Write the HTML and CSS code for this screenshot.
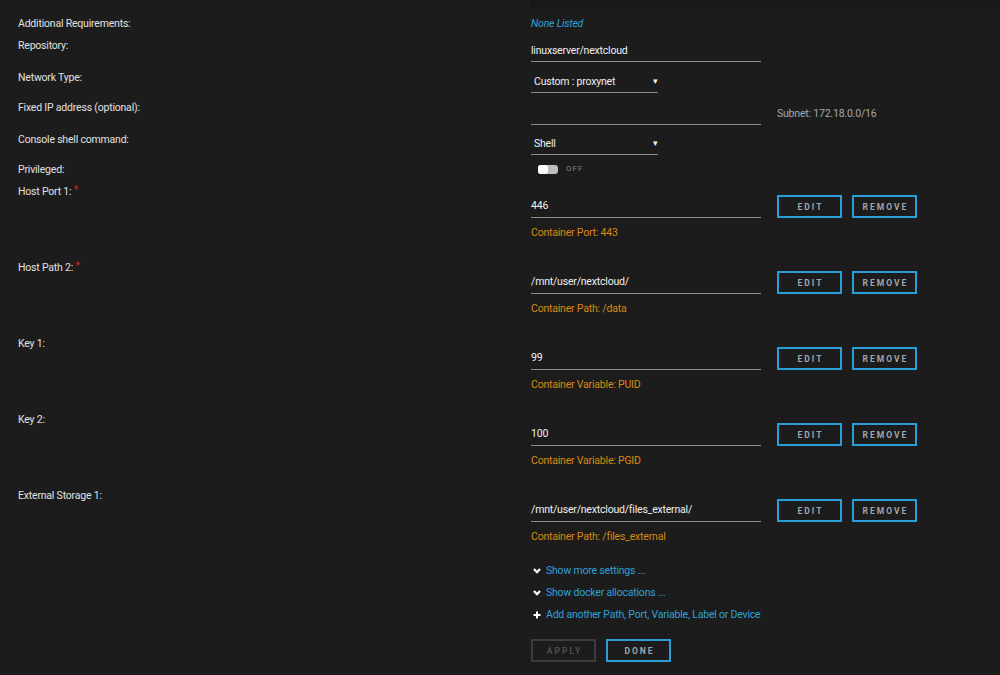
FILE: index.html
```html
<!DOCTYPE html>
<html>
<head>
<meta charset="utf-8">
<link rel="stylesheet" href="styles.css">
</head>
<body>
<div class="top-box"></div>
<div class="form">
  <div class="row r-req">
    <div class="label">Additional Requirements:</div>
    <div class="value"><span class="none">None Listed</span></div>
  </div>
  <div class="row r-repo">
    <div class="label">Repository:</div>
    <div class="value"><div class="input wide">linuxserver/nextcloud</div></div>
  </div>
  <div class="row r-net">
    <div class="label">Network Type:</div>
    <div class="value"><div class="select">Custom : proxynet<span class="caret">▾</span></div></div>
  </div>
  <div class="row r-ip">
    <div class="label">Fixed IP address (optional):</div>
    <div class="value inline"><div class="input wide ip"></div><span class="subnet">Subnet: 172.18.0.0/16</span></div>
  </div>
  <div class="row r-shell">
    <div class="label">Console shell command:</div>
    <div class="value"><div class="select">Shell<span class="caret">▾</span></div></div>
  </div>
  <div class="row r-priv">
    <div class="label">Privileged:</div>
    <div class="value"><div class="toggle"><span class="track"><span class="knob"></span></span><span class="off">OFF</span></div></div>
  </div>
  <div class="row r-item">
    <div class="label">Host Port 1: <span class="req">*</span></div>
    <div class="value">
      <div class="item-line"><div class="input wide">446</div><button class="btn">EDIT</button><button class="btn">REMOVE</button></div>
      <div class="note">Container Port: 443</div>
    </div>
  </div>
  <div class="row r-item">
    <div class="label">Host Path 2: <span class="req">*</span></div>
    <div class="value">
      <div class="item-line"><div class="input wide">/mnt/user/nextcloud/</div><button class="btn">EDIT</button><button class="btn">REMOVE</button></div>
      <div class="note">Container Path: /data</div>
    </div>
  </div>
  <div class="row r-item">
    <div class="label">Key 1:</div>
    <div class="value">
      <div class="item-line"><div class="input wide">99</div><button class="btn">EDIT</button><button class="btn">REMOVE</button></div>
      <div class="note">Container Variable: PUID</div>
    </div>
  </div>
  <div class="row r-item">
    <div class="label">Key 2:</div>
    <div class="value">
      <div class="item-line"><div class="input wide">100</div><button class="btn">EDIT</button><button class="btn">REMOVE</button></div>
      <div class="note">Container Variable: PGID</div>
    </div>
  </div>
  <div class="row r-item last">
    <div class="label">External Storage 1:</div>
    <div class="value">
      <div class="item-line"><div class="input wide">/mnt/user/nextcloud/files_external/</div><button class="btn">EDIT</button><button class="btn">REMOVE</button></div>
      <div class="note">Container Path: /files_external</div>
    </div>
  </div>
  <div class="row">
    <div></div>
    <div class="value">
      <div class="links">
        <div class="link"><svg class="ico" viewBox="0 0 8 6" width="8" height="6"><path d="M1 1 L4 4.2 L7 1" fill="none" stroke="#fff" stroke-width="2.2"/></svg>Show more settings ...</div>
        <div class="link"><svg class="ico" viewBox="0 0 8 6" width="8" height="6"><path d="M1 1 L4 4.2 L7 1" fill="none" stroke="#fff" stroke-width="2.2"/></svg>Show docker allocations ...</div>
        <div class="link"><svg class="ico" viewBox="0 0 8 8" width="8" height="8"><path d="M4 0.5 V7.5 M0.5 4 H7.5" fill="none" stroke="#fff" stroke-width="2"/></svg>Add another Path, Port, Variable, Label or Device</div>
      </div>
      <div class="actions"><button class="btn disabled">APPLY</button><button class="btn">DONE</button></div>
    </div>
  </div>
</div>
</body>
</html>
```
FILE: styles.css
```css
html, body {
  margin: 0;
  padding: 0;
  background: #1c1c1c;
}
body {
  font-family: "Roboto", "Liberation Sans", sans-serif;
  font-size: 10.5px;
  letter-spacing: -0.2px;
  line-height: 14px;
  color: #e2e2e2;
  width: 1000px;
  height: 675px;
  overflow: hidden;
}
.top-box {
  margin-left: 530px;
  height: 7px;
  background: #171717;
  border-bottom-left-radius: 2px;
}
.form {
  padding-left: 18px;
  padding-top: 10px;
}
.row {
  display: grid;
  grid-template-columns: 513px 1fr;
}
.label {
  color: #e0e0e0;
  white-space: nowrap;
}
.req {
  color: #e02020;
  font-size: 10px;
  vertical-align: top;
  position: relative;
  top: -2px;
}
.r-req { height: 22px; }
.r-repo { height: 32px; }
.r-net { height: 30px; }
.r-ip { height: 32px; }
.r-shell { height: 30px; }
.r-priv { height: 22px; }
.r-item { height: 76px; }
.r-item.last { height: 71px; }
.none {
  color: #2fa0d6;
  font-style: italic;
  display: block;
}
.input {
  box-sizing: border-box;
  height: 22px;
  line-height: 21px;
  border-bottom: 1px solid #8a8a8a;
  color: #f0f0f0;
  white-space: nowrap;
}
.wide { width: 230px; }
.r-repo .input { margin-top: 1px; }
.r-ip .input { margin-top: 2px; }
.inline {
  display: flex;
  align-items: flex-start;
}
.subnet {
  color: #a2a8b0;
  margin-left: 16px;
  line-height: 21px;
  margin-top: 2px;
}
.select {
  box-sizing: border-box;
  width: 127px;
  height: 22px;
  line-height: 21px;
  border-bottom: 1px solid #8a8a8a;
  padding-left: 3px;
  color: #f0f0f0;
  display: flex;
  justify-content: space-between;
}
.caret {
  font-size: 9px;
  color: #f0f0f0;
  padding-right: 0;
}
.toggle {
  display: flex;
  align-items: center;
  margin-left: 7px;
  height: 12px;
}
.track {
  display: inline-block;
  width: 20px;
  height: 9px;
  background: #bdbdbd;
  border-radius: 3px;
  position: relative;
}
.knob {
  position: absolute;
  left: 0;
  top: 0;
  width: 10px;
  height: 9px;
  background: #ffffff;
  border-radius: 3px;
}
.off {
  margin-left: 8px;
  font-size: 8px;
  letter-spacing: 1px;
  color: #858585;
}
.item-line {
  display: flex;
  align-items: flex-start;
  margin-top: 10px;
}
.item-line .input {
  height: 23px;
  line-height: 22px;
}
.btn {
  box-sizing: border-box;
  width: 65px;
  height: 23px;
  background: #1c1c1c;
  border: 2px solid #2a9ed8;
  color: #a0a6ae;
  font-family: "Roboto", "Liberation Sans", sans-serif;
  font-weight: bold;
  font-size: 8.5px;
  letter-spacing: 2px;
  padding: 0 0 0 2px;
  margin: 0 0 0 10px;
}
.item-line .input + .btn { margin-left: 16px; }
.note {
  color: #d88a12;
  margin-top: 8px;
}
.link {
  height: 22px;
  display: flex;
  align-items: center;
  color: #2fa0d6;
}
.ico {
  margin-left: 2px;
  margin-right: 5px;
}
.actions {
  display: flex;
  margin-top: 13px;
}
.actions .btn { margin-left: 0; margin-right: 10px; }
.btn.disabled {
  border-color: #3c3c3c;
  color: #4e4e4e;
}
```
